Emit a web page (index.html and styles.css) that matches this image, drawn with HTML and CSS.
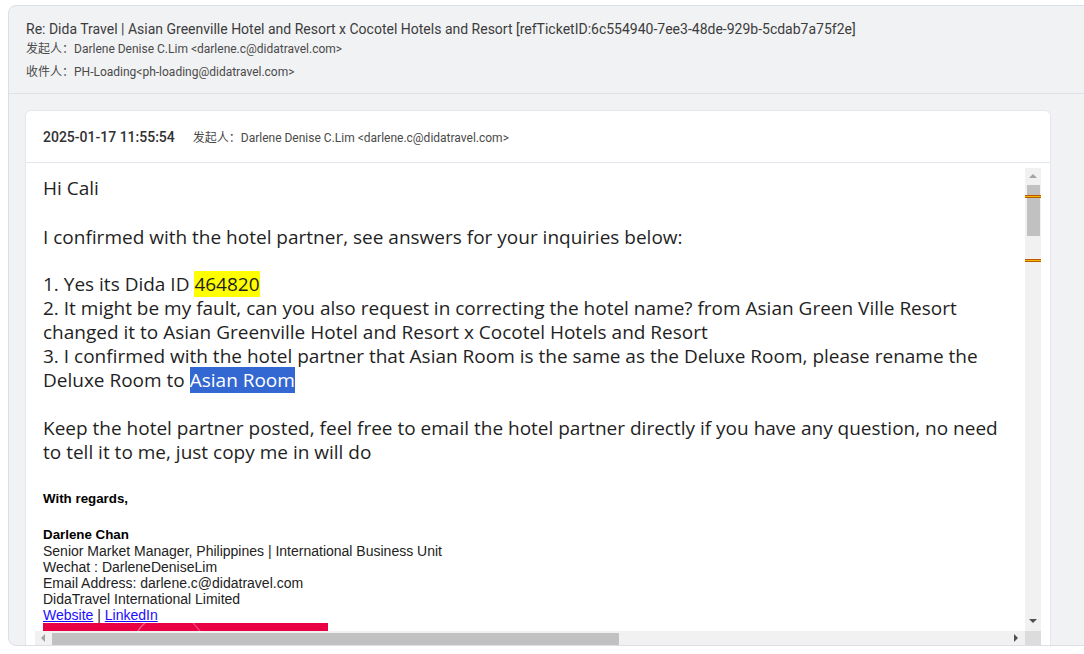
FILE: index.html
```html
<!DOCTYPE html>
<html lang="en">
<head>
<meta charset="utf-8">
<title>Mail</title>
<link rel="stylesheet" href="styles.css">
</head>
<body>
<div class="frame">
  <div class="mail-head">
    <div class="subject">Re: Dida Travel | Asian Greenville Hotel and Resort x Cocotel Hotels and Resort [refTicketID:6c554940-7ee3-48de-929b-5cdab7a75f2e]</div>
    <div class="meta">发起人：Darlene Denise C.Lim &lt;darlene.c@didatravel.com&gt;</div>
    <div class="meta meta-to">收件人：PH-Loading&lt;ph-loading@didatravel.com&gt;</div>
  </div>
  <div class="mail-list">
    <div class="card">
      <div class="card-head">
        <span class="date">2025-01-17 11:55:54</span>
        <span class="from">发起人：Darlene Denise C.Lim &lt;darlene.c@didatravel.com&gt;</span>
      </div>
      <div class="card-body">
        <div class="viewer">
          <div class="viewer-main">
            <div class="viewport">
              <div class="doc">
                <p class="line">Hi Cali</p>
                <p class="line gap-a">I confirmed with the hotel partner, see answers for your inquiries below:</p>
                <p class="line gap-b">1. Yes its Dida ID <span class="hl">464820</span><br>
                2. It might be my fault, can you also request in correcting the hotel name? from Asian Green Ville Resort<br>
                changed it to Asian Greenville Hotel and Resort x Cocotel Hotels and Resort<br>
                3. I confirmed with the hotel partner that Asian Room is the same as the Deluxe Room, please rename the<br>
                Deluxe Room to <span class="sel">Asian Room</span></p>
                <p class="line gap-c">Keep the hotel partner posted, feel free to email the hotel partner directly if you have any question, no need<br>
                to tell it to me, just copy me in will do</p>
                <div class="sig">
                  <p class="sig-bold">With regards,</p>
                  <p class="sig-bold sig-name">Darlene Chan</p>
                  <p>Senior Market Manager, Philippines | International Business Unit</p>
                  <p>Wechat : DarleneDeniseLim</p>
                  <p>Email Address: darlene.c@didatravel.com</p>
                  <p>DidaTravel International Limited</p>
                  <p><a href="#">Website</a> | <a href="#">LinkedIn</a></p>
                  <div class="banner">
                    <svg width="285" height="60" viewBox="0 0 285 60">
                      <path d="M95 40 C 88 20, 92 8, 102 0" fill="none" stroke="rgba(255,255,255,0.35)" stroke-width="1.5"/>
                      <path d="M150 0 C 160 10, 168 25, 170 40" fill="none" stroke="rgba(255,255,255,0.25)" stroke-width="1.5"/>
                    </svg>
                  </div>
                </div>
              </div>
            </div>
            <div class="vbar">
              <div class="arrow arrow-up"></div>
              <div class="vtrack"><div class="vthumb"></div></div>
              <div class="arrow arrow-down"></div>
              <div class="tick tick-1"></div>
              <div class="tick tick-2"></div>
            </div>
          </div>
          <div class="hbar-row">
            <div class="hbar">
              <div class="arrow arrow-left"></div>
              <div class="htrack"><div class="hthumb"></div></div>
              <div class="arrow arrow-right"></div>
            </div>
            <div class="corner"></div>
          </div>
        </div>
      </div>
    </div>
  </div>
</div>
</body>
</html>
```

FILE: styles.css
```css
html, body {
  margin: 0;
  padding: 0;
  background: #ffffff;
  overflow: hidden;
}
body {
  width: 1084px;
  height: 654px;
  font-family: Roboto, "Noto Sans CJK SC", sans-serif;
}
.frame {
  margin: 5px 0 0 8px;
  width: 1100px;
  height: 641px;
  box-sizing: border-box;
  border: 1px solid #dcdfe6;
  border-radius: 8px;
  background: #f1f2f4;
  display: flex;
  flex-direction: column;
  overflow: hidden;
}
.mail-head {
  padding: 13px 17px 12px 17px;
  border-bottom: 1px solid #dfe1e5;
}
.subject {
  font-size: 14px;
  line-height: 21px;
  color: #3c3c3c;
}
.meta {
  font-size: 12px;
  line-height: 18px;
  color: #4a4a4a;
}
.meta-to {
  margin-top: 5px;
}
.mail-list {
  flex: 1;
  min-height: 0;
  padding: 16px 0 0 16px;
  display: flex;
}
.card {
  width: 1026px;
  box-sizing: border-box;
  background: #ffffff;
  border: 1px solid #e4e7ed;
  border-bottom: none;
  border-radius: 6px 6px 0 0;
  display: flex;
  flex-direction: column;
}
.card-head {
  height: 51px;
  border-bottom: 1px solid #e4e7ed;
  padding-left: 17px;
  display: flex;
  align-items: center;
}
.date {
  font-size: 14px;
  font-weight: 500;
  color: #303133;
  margin-right: 18px;
}
.from {
  font-size: 12px;
  color: #4a4a4a;
}
.card-body {
  flex: 1;
  min-height: 0;
  padding: 5px 9px 0 9px;
}
.viewer {
  width: 1006px;
  height: 477px;
  display: flex;
  flex-direction: column;
}
.viewer-main {
  display: flex;
  height: 463px;
}
.viewport {
  width: 990px;
  height: 463px;
  overflow: hidden;
  background: #ffffff;
}
.doc {
  padding: 8px;
  width: 1200px;
  font-family: "Open Sans", sans-serif;
  font-size: 19px;
  color: #1f1f1f;
}
.doc p {
  margin: 0;
}
.line {
  line-height: 24px;
  white-space: nowrap;
}
.gap-a {
  margin-top: 25px !important;
}
.gap-b {
  margin-top: 23px !important;
}
.gap-c {
  margin-top: 24px !important;
}
.hl {
  background: #ffff00;
}
.sel {
  background: #3367d1;
  color: #ffffff;
}
.sig {
  margin-top: 27px;
  font-family: "Liberation Sans", Arial, sans-serif;
  font-size: 14px;
  line-height: 16px;
  color: #222222;
}
.sig-bold {
  font-weight: bold;
  font-size: 13.33px;
  color: #000000;
}
.sig-name {
  margin-top: 20px !important;
}
.sig a {
  color: #1a0dff;
  text-decoration: underline;
}
.banner {
  width: 285px;
  height: 60px;
  background: #ea0044;
}
.banner svg {
  display: block;
}
.vbar {
  position: relative;
  width: 16px;
  height: 463px;
  background: #f1f1f1;
  display: flex;
  flex-direction: column;
}
.vtrack {
  flex: 1;
  position: relative;
}
.vthumb {
  margin: 0 1px 0 2px;
  height: 51px;
  background: #c1c1c1;
}
.arrow {
  width: 16px;
  height: 17px;
  flex: none;
  position: relative;
}
.arrow::after {
  content: "";
  position: absolute;
  width: 0;
  height: 0;
}
.arrow-up::after {
  left: 4px;
  top: 6px;
  border-left: 4px solid transparent;
  border-right: 4px solid transparent;
  border-bottom: 4px solid #a3a3a3;
}
.arrow-down::after {
  left: 4px;
  top: 5px;
  border-left: 4px solid transparent;
  border-right: 4px solid transparent;
  border-top: 4px solid #505050;
}
.tick {
  position: absolute;
  left: 0;
  width: 16px;
  height: 1px;
  background: #f5b700;
  border-top: 1px solid #b85a00;
  border-bottom: 1px solid #b85a00;
}
.tick-1 { top: 27px; }
.tick-2 { top: 91px; }
.hbar-row {
  display: flex;
  height: 14px;
}
.hbar {
  width: 990px;
  height: 14px;
  background: #f1f1f1;
  display: flex;
  align-items: flex-end;
}
.hbar .arrow {
  width: 17px;
  height: 14px;
  align-self: stretch;
}
.htrack {
  flex: 1;
  height: 12px;
}
.hthumb {
  width: 567px;
  height: 12px;
  background: #c1c1c1;
}
.arrow-left::after {
  left: 6px;
  top: 3px;
  border-top: 4px solid transparent;
  border-bottom: 4px solid transparent;
  border-right: 4px solid #a3a3a3;
}
.arrow-right::after {
  left: 6px;
  top: 3px;
  border-top: 4px solid transparent;
  border-bottom: 4px solid transparent;
  border-left: 4px solid #505050;
}
.corner {
  width: 16px;
  height: 14px;
  background: #dcdcdc;
}
```
